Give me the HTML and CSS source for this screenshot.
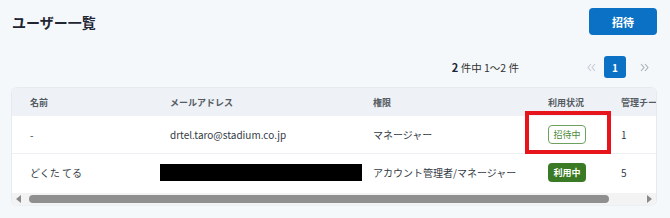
FILE: index.html
```html
<!DOCTYPE html>
<html lang="ja">
<head>
<meta charset="utf-8">
<link rel="stylesheet" href="styles.css">
</head>
<body>
<div class="page">
  <div class="top">
    <h1 class="title">ユーザー一覧</h1>
    <button class="invite">招待</button>
  </div>
  <div class="pager">
    <span class="count"><b>2</b> 件中 1〜2 件</span>
    <span class="nav prev"><svg width="9" height="9" viewBox="0 0 9 9"><path d="M4 1 L1 4.5 L4 8 M8 1 L5 4.5 L8 8" fill="none" stroke="currentColor" stroke-width="1.1"/></svg></span>
    <span class="pg">1</span>
    <span class="nav next"><svg width="9" height="9" viewBox="0 0 9 9"><path d="M1 1 L4 4.5 L1 8 M5 1 L8 4.5 L5 8" fill="none" stroke="currentColor" stroke-width="1.1"/></svg></span>
  </div>
  <div class="card-wrap">
    <div class="card">
      <div class="row head">
        <div class="c c1">名前</div>
        <div class="c c2">メールアドレス</div>
        <div class="c c3">権限</div>
        <div class="c c4">利用状況</div>
        <div class="c c5">管理チーム</div>
      </div>
      <div class="row body">
        <div class="c c1">-</div>
        <div class="c c2">drtel.taro@stadium.co.jp</div>
        <div class="c c3">マネージャー</div>
        <div class="c c4"><span class="badge outline">招待中</span></div>
        <div class="c c5">1</div>
      </div>
      <div class="row body last">
        <div class="c c1">どくた てる</div>
        <div class="c c2 visible"><span class="redact"></span></div>
        <div class="c c3">アカウント管理者/マネージャー</div>
        <div class="c c4"><span class="badge filled">利用中</span></div>
        <div class="c c5">5</div>
      </div>
      <div class="scrollbar">
        <span class="arrow left"></span>
        <span class="thumb"></span>
        <span class="arrow right"></span>
      </div>
    </div>
    <div class="highlight"></div>
  </div>
</div>
</body>
</html>
```
FILE: styles.css
```css
* { box-sizing: border-box; }
html, body { margin: 0; padding: 0; }
body {
  background: #f5f8fb;
  font-family: "Noto Sans CJK JP", "Noto Sans", sans-serif;
  color: #333;
  width: 670px;
  height: 218px;
  overflow: hidden;
}
.page { padding: 8px 13px 0 11px; }
.top {
  display: flex;
  justify-content: space-between;
  align-items: flex-start;
  height: 27px;
}
.title {
  margin: 5px 0 0 1px;
  font-size: 14px;
  line-height: 18px;
  font-weight: 700;
  color: #1f2633;
}
.invite {
  width: 68px;
  height: 27px;
  border: none;
  border-radius: 4px;
  background: #0b71c4;
  color: #fff;
  font-family: inherit;
  font-size: 11px;
  font-weight: 700;
  padding: 0;
}
.pager {
  display: flex;
  justify-content: flex-end;
  align-items: center;
  margin-top: 21px;
  height: 22px;
  padding-right: 8px;
}
.count {
  font-size: 10.5px;
  color: #333;
  margin-right: 68px;
}
.count b { font-size: 11px; color: #1f2633; }
.nav { display: flex; align-items: center; }
.prev { color: #c5cbd5; }
.next { color: #a7aeb9; margin-left: 14px; }
.pg {
  width: 22px;
  height: 22px;
  margin-left: 8px;
  border-radius: 3px;
  background: #0b71c4;
  color: #fff;
  font-size: 10px;
  font-weight: 700;
  display: flex;
  align-items: center;
  justify-content: center;
}
.card-wrap {
  position: relative;
  margin-top: 9px;
  width: 646px;
}
.card {
  background: #fff;
  border-radius: 6px;
  overflow: hidden;
  border: 1px solid #e6eaef;
  border-bottom-color: #eceff3;
}
.row {
  display: grid;
  grid-template-columns: 140px 203px 175px 73px 1fr;
  align-items: center;
}
.head {
  height: 28px;
  background: #eef2f6;
  font-size: 9px;
  font-weight: 700;
  color: #555b63;
}
.body {
  height: 38px;
  font-size: 10px;
  color: #333a44;
  border-bottom: 1px solid #eef0f3;
}
.body.last { height: 37px; border-bottom: none; }
.c { padding-left: 18px; white-space: nowrap; overflow: hidden; }
.c.visible { overflow: visible; }
.redact {
  display: block;
  width: 202px;
  height: 17px;
  background: #000;
  margin-left: -10px;
}
.badge {
  display: inline-flex;
  align-items: center;
  justify-content: center;
  width: 38px;
  height: 19px;
  border-radius: 4px;
  font-size: 9px;
}
.outline { border: 1px solid #6ea15f; color: #4d8a3b; background: #fff; font-weight: 400; }
.filled { background: #3b7a24; color: #fff; font-weight: 700; }
.scrollbar {
  position: relative;
  height: 12px;
  margin-top: 2px;
  background: #f3f3f3;
}
.thumb {
  display: block;
  position: absolute;
  left: 17px;
  width: 580px;
  top: 2px;
  height: 8px;
  border-radius: 4px;
  background: #8f8f8f;
}
.arrow {
  position: absolute;
  top: 2px;
  width: 0; height: 0;
  border-top: 4px solid transparent;
  border-bottom: 4px solid transparent;
}
.arrow.left { left: 4px; border-right: 5px solid #8a8a8a; }
.arrow.right { right: 4px; border-left: 5px solid #8a8a8a; }
.highlight {
  position: absolute;
  left: 514px;
  top: 24px;
  width: 86px;
  height: 43px;
  border: 4px solid #e8141c;
}
```
